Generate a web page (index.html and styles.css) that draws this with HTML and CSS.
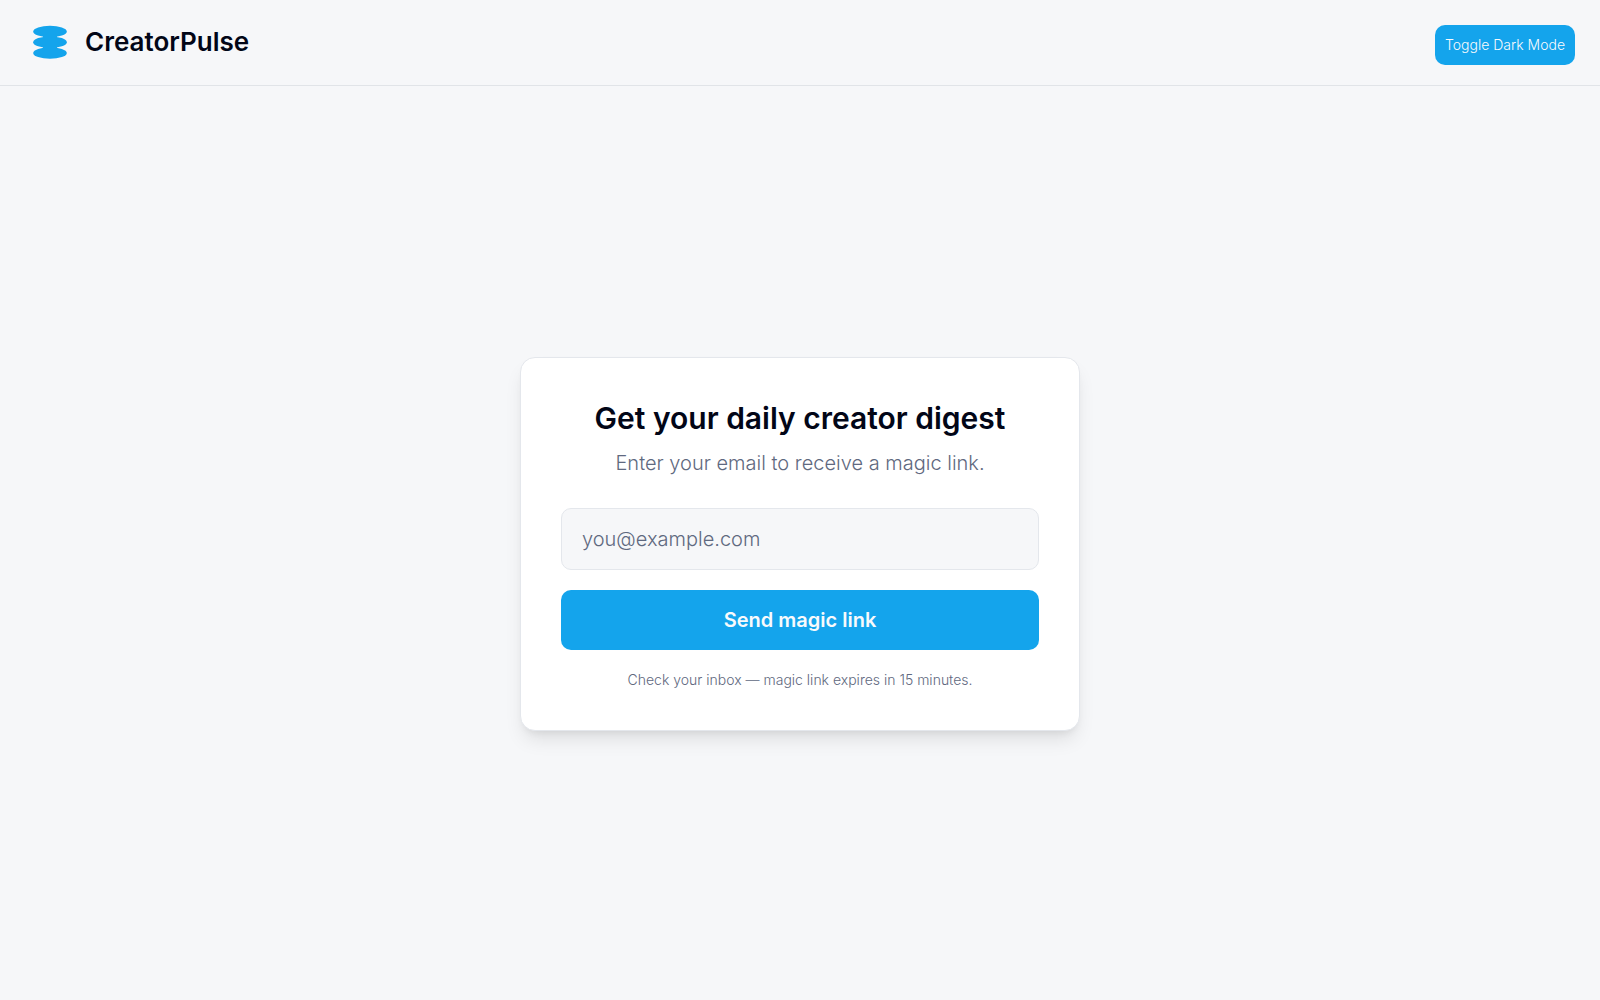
FILE: index.html
```html
<!DOCTYPE html>
<html lang="en">
<head>
  <meta charset="utf-8">
  <meta name="viewport" content="width=device-width, initial-scale=1">
  <title>CreatorPulse</title>
  <link rel="stylesheet" href="styles.css">
</head>
<body>
  <header class="site-header">
    <div class="brand">
      <svg class="brand-logo" viewBox="0 0 34 34" aria-hidden="true">
        <ellipse cx="17" cy="6.5" rx="16.8" ry="5.8"/>
        <ellipse cx="17" cy="17.2" rx="16.8" ry="5.8"/>
        <ellipse cx="17" cy="28" rx="16.8" ry="5.8"/>
        <path d="M10 10h14v14H10z"/>
      </svg>
      <span class="brand-name">CreatorPulse</span>
    </div>
    <button class="theme-toggle" type="button">Toggle Dark Mode</button>
  </header>
  <main class="page">
    <section class="card">
      <h1 class="card-title">Get your daily creator digest</h1>
      <p class="card-subtitle">Enter your email to receive a magic link.</p>
      <form class="signup">
        <input class="email" type="email" aria-label="Email address" placeholder="you@example.com">
        <button class="submit" type="submit">Send magic link</button>
      </form>
      <p class="note">Check your inbox — magic link expires in 15 minutes.</p>
    </section>
  </main>
</body>
</html>
```
FILE: styles.css
```css
*,
*::before,
*::after {
  box-sizing: border-box;
}

body {
  margin: 0;
  min-height: 100vh;
  display: flex;
  flex-direction: column;
  background: #f6f7f9;
  color: #020617;
  font-family: Inter, "Open Sans", sans-serif;
  font-weight: 300;
}

h1,
p {
  margin: 0;
}

button,
input {
  font: inherit;
}

.site-header {
  display: flex;
  justify-content: space-between;
  align-items: flex-start;
  padding: 25px 25px 20px 33px;
  border-bottom: 1px solid #e1e4e8;
}

.brand {
  display: flex;
  align-items: center;
  gap: 18px;
}

.brand-logo {
  width: 34px;
  height: 34px;
  fill: #14a4ec;
}

.brand-name {
  font-size: 26px;
  line-height: 34px;
  font-weight: 600;
}

.theme-toggle {
  padding: 10px;
  border: 0;
  border-radius: 10px;
  background: #14a4ec;
  color: #f8fafc;
  font-size: 14px;
  line-height: 20px;
}

.page {
  flex: 1;
  display: flex;
  align-items: center;
  justify-content: center;
  padding: 22px 20px 20px;
}

.card {
  width: 100%;
  max-width: 560px;
  padding: 40px;
  border: 1px solid #e4e7ec;
  border-radius: 15px;
  background: #fff;
  box-shadow: 0 12px 19px -4px rgb(0 0 0 / 10%), 0 5px 8px -5px rgb(0 0 0 / 10%);
  text-align: center;
}

.card-title {
  margin-bottom: 10px;
  font-size: 30px;
  line-height: 40px;
  font-weight: 600;
}

.card-subtitle {
  margin-bottom: 30px;
  color: #5f6980;
  font-size: 20px;
  line-height: 30px;
}

.signup {
  display: grid;
  gap: 20px;
  margin-bottom: 20px;
}

.email {
  width: 100%;
  padding: 15px 20px;
  border: 1px solid #e4e7ec;
  border-radius: 10px;
  background: #f6f7f9;
  color: #020617;
  font-size: 20px;
  line-height: 30px;
}

.email::placeholder {
  color: #5f6980;
  opacity: 1;
}

.submit {
  padding: 15px 20px;
  border: 0;
  border-radius: 10px;
  background: #14a4ec;
  color: #f8fafc;
  font-size: 20px;
  line-height: 30px;
  font-weight: 600;
}

.note {
  color: #5f6980;
  font-size: 14px;
  line-height: 20px;
}
```
